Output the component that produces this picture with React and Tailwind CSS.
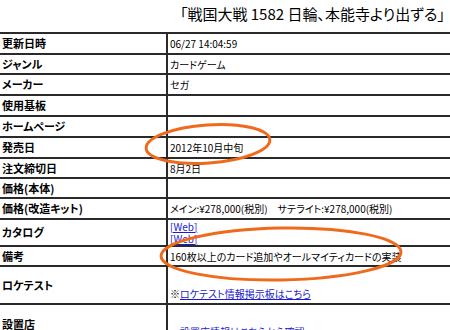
import React from "react";

const font = { fontFamily: "'Noto Sans CJK JP', 'Liberation Sans', sans-serif" };

const rows = [
  { label: "更新日時", h: "h-[21px]", value: "06/27 14:04:59" },
  { label: "ジャンル", h: "h-[20px]", value: "カードゲーム" },
  { label: "メーカー", h: "h-[21px]", value: "セガ" },
  { label: "使用基板", h: "h-[21px]", value: "" },
  { label: "ホームページ", h: "h-[21px]", value: "" },
  { label: "発売日", h: "h-[21px]", value: "2012年10月中旬" },
  { label: "注文締切日", h: "h-[20px]", value: "8月2日" },
  { label: "価格(本体)", h: "h-[20px]", value: "" },
  {
    label: "価格(改造キット)",
    h: "h-[21px]",
    value: "メイン:¥278,000(税別)　サテライト:¥278,000(税別)",
  },
  {
    label: "カタログ",
    h: "h-[27px]",
    value: (
      <div className="flex flex-col leading-[12px]">
        <a className="text-[#1a1ad0] underline">[Web]</a>
        <a className="text-[#1a1ad0] underline">[Web]</a>
      </div>
    ),
  },
  { label: "備考", h: "h-[20px]", value: "160枚以上のカード追加やオールマイティカードの実装" },
  {
    label: "ロケテスト",
    h: "h-[38px]",
    value: (
      <div className="flex h-full flex-col justify-end pb-[2px]">
        <span>
          ※<a className="text-[#1a1ad0] underline">ロケテスト情報掲示板はこちら</a>
        </span>
      </div>
    ),
  },
  {
    label: "設置店",
    h: "h-[40px]",
    value: (
      <div className="flex h-full flex-col justify-end pl-[10px] pb-[4px]">
        <a className="text-[#1a1ad0] underline">設置店情報はこちらから確認</a>
      </div>
    ),
  },
];

export default function App() {
  return (
    <div
      className="relative h-[330px] w-[450px] overflow-hidden bg-white text-black [font-feature-settings:'palt']"
      style={font}
    >
      <div className="flex h-[32px] items-start justify-end pr-[5px] pt-[4px] text-[15px] leading-[20px]">
        「戦国大戦 1582 日輪、本能寺より出ずる」
      </div>
      <div className="flex flex-col">
        {rows.map((r) => (
          <div key={r.label} className={`flex border-t-2 border-[#2a2a2a] ${r.h}`}>
            <div className="flex w-[168px] shrink-0 items-center border-r-2 border-[#2a2a2a] pl-[2px] text-[11px] font-bold">
              {r.label}
            </div>
            <div className="flex flex-1 items-center pl-[2px] text-[10px]">{r.value}</div>
          </div>
        ))}
      </div>
      <svg className="pointer-events-none absolute left-0 top-0" width="450" height="330">
        <ellipse
          cx="208"
          cy="144"
          rx="62"
          ry="19"
          transform="rotate(-4 208 144)"
          fill="none"
          stroke="#ee6a1c"
          strokeWidth="3"
        />
        <ellipse
          cx="281"
          cy="254"
          rx="120"
          ry="26"
          transform="rotate(-1 281 254)"
          fill="none"
          stroke="#ee6a1c"
          strokeWidth="3"
        />
      </svg>
    </div>
  );
}
